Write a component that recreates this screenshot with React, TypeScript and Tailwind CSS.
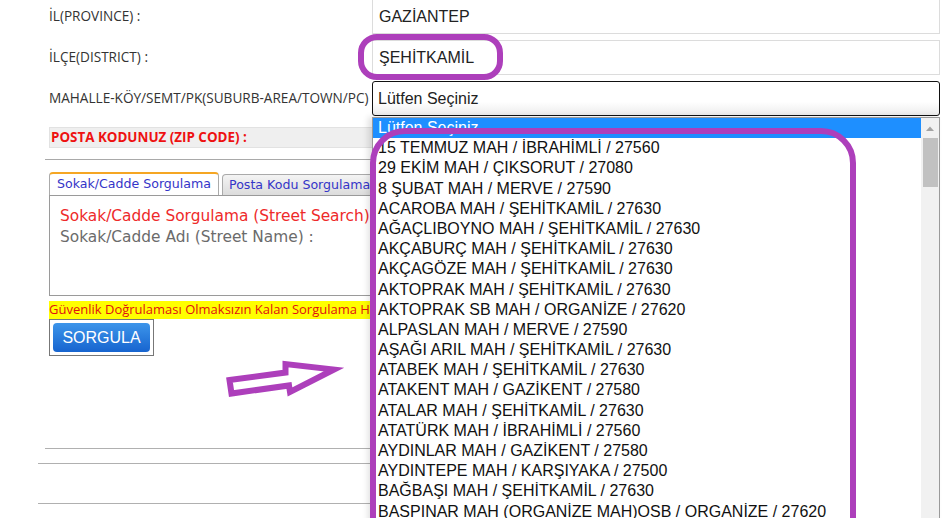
import React from "react";

const items = [
  "15 TEMMUZ MAH / İBRAHİMLİ / 27560",
  "29 EKİM MAH / ÇIKSORUT / 27080",
  "8 ŞUBAT MAH / MERVE / 27590",
  "ACAROBA MAH / ŞEHİTKAMİL / 27630",
  "AĞAÇLIBOYNO MAH / ŞEHİTKAMİL / 27630",
  "AKÇABURÇ MAH / ŞEHİTKAMİL / 27630",
  "AKÇAGÖZE MAH / ŞEHİTKAMİL / 27630",
  "AKTOPRAK MAH / ŞEHİTKAMİL / 27630",
  "AKTOPRAK SB MAH / ORGANİZE / 27620",
  "ALPASLAN MAH / MERVE / 27590",
  "AŞAĞI ARIL MAH / ŞEHİTKAMİL / 27630",
  "ATABEK MAH / ŞEHİTKAMİL / 27630",
  "ATAKENT MAH / GAZİKENT / 27580",
  "ATALAR MAH / ŞEHİTKAMİL / 27630",
  "ATATÜRK MAH / İBRAHİMLİ / 27560",
  "AYDINLAR MAH / GAZİKENT / 27580",
  "AYDINTEPE MAH / KARŞIYAKA / 27500",
  "BAĞBAŞI MAH / ŞEHİTKAMİL / 27630",
  "BASPINAR MAH (ORGANİZE MAH)OSB / ORGANİZE / 27620",
];

const labelCls =
  "w-[323px] shrink-0 text-[13.6px] text-[#333] font-['Open_Sans',sans-serif] whitespace-nowrap";
const arial = "font-['Liberation_Sans',Arial,sans-serif]";

export default function App() {
  return (
    <div className="relative w-[945px] h-[518px] overflow-hidden bg-white">
      {/* form rows */}
      <div className="flex flex-col pl-[49px] -mt-[1px]">
        <div className="flex items-center h-[35px]">
          <div className={labelCls}>İL(PROVINCE) :</div>
          <div
            className={`w-[568px] h-[35px] border border-[#dcdcdc] flex items-center pl-[6px] text-[16px] text-[#222] ${arial}`}
          >
            GAZİANTEP
          </div>
        </div>
        <div className="flex items-center h-[35px] mt-[6px]">
          <div className={labelCls}>İLÇE(DISTRICT) :</div>
          <div
            className={`w-[568px] h-[35px] border border-[#dcdcdc] flex items-center pl-[6px] text-[16px] text-[#222] ${arial}`}
          >
            ŞEHİTKAMİL
          </div>
        </div>
        <div className="flex items-center h-[35px] mt-[6px]">
          <div className={labelCls}>MAHALLE-KÖY/SEMT/PK(SUBURB-AREA/TOWN/PC) :</div>
          <div
            className={`w-[568px] h-[35px] border-[1.5px] border-[#111] rounded-[3px] bg-gradient-to-b from-white from-60% to-[#ececec] flex items-center pl-[5px] text-[16px] text-[#222] ${arial}`}
          >
            Lütfen Seçiniz
          </div>
        </div>
        <div className="flex items-center h-[21px] mt-[11px] w-[323px] bg-[#efefef] border border-[#e2e2e2] border-r-0">
          <div className="text-[13.4px] font-bold text-[#ee1111] font-['Open_Sans',sans-serif] pl-[1px] whitespace-nowrap">
            POSTA KODUNUZ (ZIP CODE) :
          </div>
        </div>
      </div>

      <div className="ml-[45px] mt-[11px] w-[327px] border-t border-[#a9a9a9]" />

      {/* tabs */}
      <div className="ml-[49px] mt-[12px] w-[323px] overflow-hidden flex items-end gap-[3px] font-['DejaVu_Sans',Verdana,sans-serif] text-[12.6px]">
        <div className="h-[23px] w-[170px] shrink-0 bg-white border border-b-0 border-[#aaa] border-t-2 border-t-[#f5a623] rounded-t-[4px] flex items-center justify-center text-[#3535c8] whitespace-nowrap">
          Sokak/Cadde Sorgulama
        </div>
        <div className="h-[21px] w-[200px] shrink-0 bg-gradient-to-b from-[#f4f4f4] to-[#dcdcdc] border border-b-0 border-[#aaa] rounded-t-[4px] flex items-center pl-[6px] text-[#3535c8] whitespace-nowrap">
          Posta Kodu Sorgulama
        </div>
      </div>
      <div className="ml-[49px] w-[323px] h-[101px] overflow-hidden border border-r-0 border-[#9a9a9a] pl-[10px] pt-[10px] font-['DejaVu_Sans',Verdana,sans-serif] text-[15.4px] leading-[20.5px] whitespace-nowrap">
        <div className="text-[#ee2a2a]">Sokak/Cadde Sorgulama (Street Search)</div>
        <div className="text-[#6b6b6b]">Sokak/Cadde Adı (Street Name) :</div>
      </div>
      <div className="ml-[49px] mt-[5px] w-[323px] h-[18px] bg-[#ffff00] flex items-center text-[13px] text-[#e01010] font-['Open_Sans',sans-serif] whitespace-nowrap overflow-hidden">
        Güvenlik Doğrulaması Olmaksızın Kalan Sorgulama Hakkınız
      </div>
      <div className="ml-[49px] w-[105px] h-[37px] border border-[#777] p-[3px]">
        <div
          className={`w-full h-full rounded-[4px] bg-gradient-to-b from-[#3d95ea] to-[#1764cf] flex items-center justify-center text-white text-[16px] ${arial}`}
        >
          SORGULA
        </div>
      </div>

      <div className="ml-[45px] mt-[92px] w-[330px] border-t border-[#b0b0b0]" />
      <div className="ml-[38px] mt-[14px] w-[340px] border-t border-[#b0b0b0]" />
      <div className="ml-[38px] mt-[39px] w-[340px] border-t border-[#b0b0b0]" />

      {/* open dropdown list */}
      <div
        className={`absolute left-[372px] top-[117px] w-[568px] h-[420px] bg-white border border-[#9a9a9a] shadow-[-4px_0_6px_rgba(0,0,0,0.12)] flex ${arial}`}
      >
        <div className="flex-1 flex flex-col text-[16px] text-[#111]">
          <div className="h-[20.2px] leading-[20.2px] bg-[#1e8fff] text-white pl-[5px]">
            Lütfen Seçiniz
          </div>
          {items.map((t) => (
            <div key={t} className="h-[20.2px] leading-[20.2px] pl-[5px] whitespace-nowrap">
              {t}
            </div>
          ))}
        </div>
        <div className="w-[18px] bg-[#f1f1f1] flex flex-col items-center">
          <svg width="18" height="20" viewBox="0 0 18 20" className="shrink-0">
            <path d="M5 13 L9 8.5 L13 13 Z" fill="#a3a3a3" />
          </svg>
          <div className="w-[15px] h-[49px] bg-[#c1c1c1]" />
        </div>
      </div>

      {/* annotations */}
      <svg
        className="absolute left-0 top-0 pointer-events-none"
        width="945"
        height="518"
        viewBox="0 0 945 518"
      >
        <rect x="361" y="37" width="139" height="40" rx="16" fill="none" stroke="#ad3fbb" strokeWidth="6" />
        <rect x="373" y="131" width="480" height="420" rx="32" fill="none" stroke="#ad3fbb" strokeWidth="6" />
        <path
          d="M229.5 380 L285.5 372.5 L285.5 364 L334 369.5 L290 392 L289 385.5 L231.5 393.5 Z"
          fill="none"
          stroke="#ad3fbb"
          strokeWidth="6"
          strokeLinejoin="miter"
        />
      </svg>
    </div>
  );
}
